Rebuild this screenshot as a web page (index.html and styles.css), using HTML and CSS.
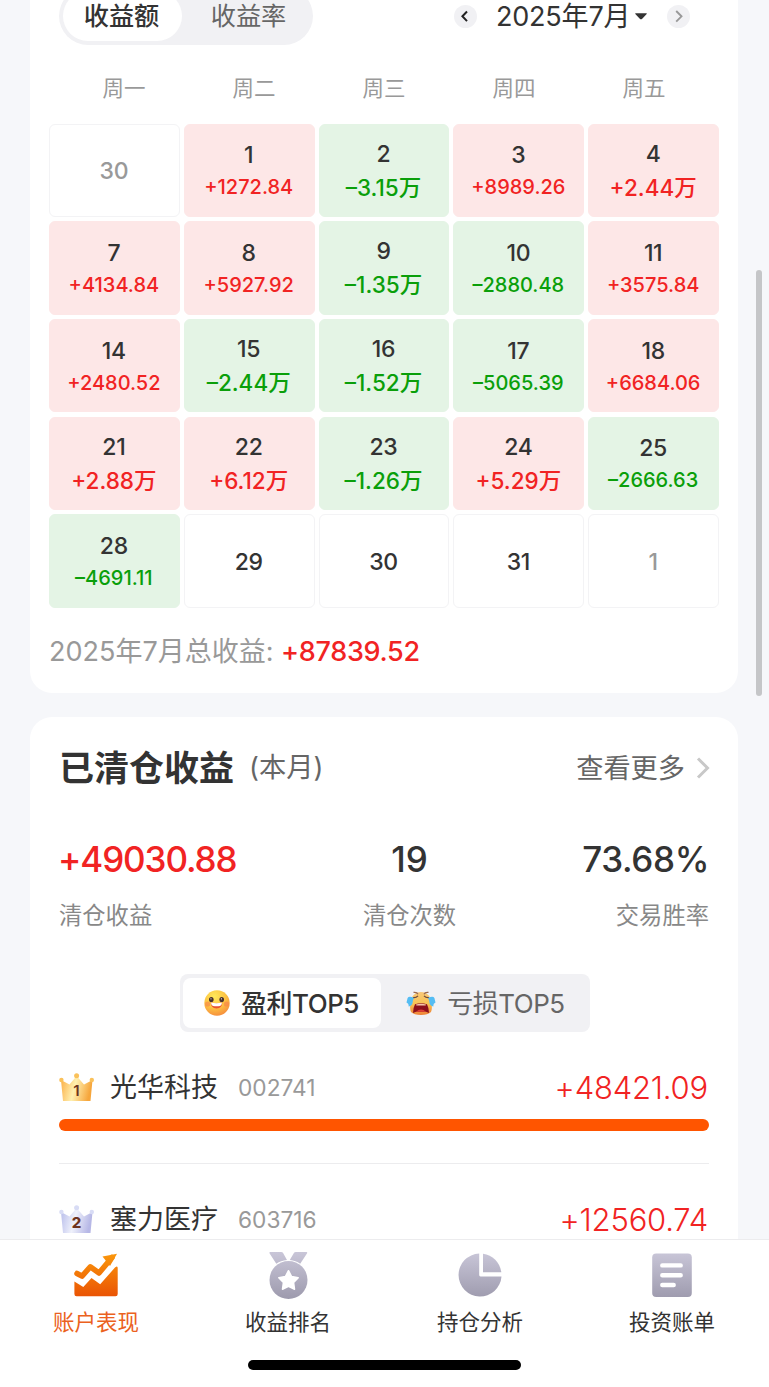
FILE: index.html
```html
<!DOCTYPE html>
<html lang="zh-CN">
<head>
    <meta charset="UTF-8">
    <meta name="viewport" content="width=device-width, initial-scale=1.0">
    <title>账户表现</title>
    <link rel="stylesheet" href="styles.css">
</head>
<body>
<div class="app">
    <main class="content">
        <section class="card calendar-card">
            <div class="calendar-header">
                <div class="pill-tabs">
                    <span class="pill-tab active">收益额</span>
                    <span class="pill-tab">收益率</span>
                </div>
                <div class="month-picker">
                    <span class="round-btn">
                        <svg width="23" height="23" viewBox="0 0 23 23"><path d="M13 6.5L8.4 11.3L13 16.1" fill="none" stroke="#222" stroke-width="2"/></svg>
                    </span>
                    <span class="month">2025年7月</span>
                    <svg class="caret" width="12" height="7" viewBox="0 0 12 7"><path d="M0.3 0.3H11.7V1L7.2 5.8Q6 6.8 4.8 5.8L0.3 1Z" fill="#333"/></svg>
                    <span class="round-btn">
                        <svg width="23" height="23" viewBox="0 0 23 23"><path d="M9.2 6L14.5 11.3L9.2 16.6" fill="none" stroke="#999" stroke-width="1.9"/></svg>
                    </span>
                </div>
            </div>

            <div class="weekdays">
                <span>周一</span><span>周二</span><span>周三</span><span>周四</span><span>周五</span>
            </div>

            <div class="days">
                <div class="day other"><b>30</b></div>
                <div class="day up"><b>1</b><span>+1272.84</span></div>
                <div class="day down big"><b>2</b><span>–3.15万</span></div>
                <div class="day up"><b>3</b><span>+8989.26</span></div>
                <div class="day up big"><b>4</b><span>+2.44万</span></div>

                <div class="day up"><b>7</b><span>+4134.84</span></div>
                <div class="day up"><b>8</b><span>+5927.92</span></div>
                <div class="day down big"><b>9</b><span>–1.35万</span></div>
                <div class="day down"><b>10</b><span>–2880.48</span></div>
                <div class="day up"><b>11</b><span>+3575.84</span></div>

                <div class="day up"><b>14</b><span>+2480.52</span></div>
                <div class="day down big"><b>15</b><span>–2.44万</span></div>
                <div class="day down big"><b>16</b><span>–1.52万</span></div>
                <div class="day down"><b>17</b><span>–5065.39</span></div>
                <div class="day up"><b>18</b><span>+6684.06</span></div>

                <div class="day up big"><b>21</b><span>+2.88万</span></div>
                <div class="day up big"><b>22</b><span>+6.12万</span></div>
                <div class="day down big"><b>23</b><span>–1.26万</span></div>
                <div class="day up big"><b>24</b><span>+5.29万</span></div>
                <div class="day down"><b>25</b><span>–2666.63</span></div>

                <div class="day down"><b>28</b><span>–4691.11</span></div>
                <div class="day"><b>29</b></div>
                <div class="day"><b>30</b></div>
                <div class="day"><b>31</b></div>
                <div class="day other"><b>1</b></div>
            </div>

            <p class="month-total">2025年7月总收益: <strong>+87839.52</strong></p>
        </section>

        <section class="card closed-card">
            <div class="closed-header">
                <h2>已清仓收益</h2>
                <span class="period">(本月)</span>
                <a class="more"><span>查看更多</span>
                    <svg width="14" height="22" viewBox="0 0 14 22"><path d="M2 1.5L11.5 11L2 20.5" fill="none" stroke="#c8c8c8" stroke-width="3"/></svg>
                </a>
            </div>

            <div class="stats">
                <div class="stat"><strong class="red">+49030.88</strong><span>清仓收益</span></div>
                <div class="stat center"><strong>19</strong><span>清仓次数</span></div>
                <div class="stat right"><strong>73.68%</strong><span>交易胜率</span></div>
            </div>

            <div class="top-tabs">
                <div class="top-tab active">
                    <svg width="26" height="26" viewBox="0 0 26 26">
                        <defs>
                            <radialGradient id="smile" cx="0.4" cy="0.25" r="0.8"><stop offset="0" stop-color="#ffe95a"/><stop offset="0.55" stop-color="#fdc343"/><stop offset="1" stop-color="#f58a3c"/></radialGradient>
                        </defs>
                        <circle cx="13" cy="13" r="12.7" fill="url(#smile)"/>
                        <circle cx="3.6" cy="14" r="2.6" fill="#f7814a" opacity="0.6"/>
                        <circle cx="22.4" cy="14" r="2.6" fill="#f7814a" opacity="0.6"/>
                        <ellipse cx="7.3" cy="9.6" rx="2.3" ry="2.7" fill="#47302c"/>
                        <ellipse cx="17.7" cy="9.6" rx="2.3" ry="2.7" fill="#47302c"/>
                        <circle cx="7" cy="8.8" r="0.6" fill="#fff"/>
                        <circle cx="17.4" cy="8.8" r="0.6" fill="#fff"/>
                        <path d="M6.8 12.6Q12.5 13.8 18.2 12.6Q18.4 18.4 12.5 18.4Q6.8 18.4 6.8 12.6Z" fill="#e9532f"/>
                        <path d="M6.9 12.6Q12.5 13.8 18.1 12.6Q17.8 15.6 16 16Q12.5 16.6 9 16Q7.2 15.6 6.9 12.6Z" fill="#fff"/>
                    </svg>
                    <span>盈利TOP5</span>
                </div>
                <div class="top-tab">
                    <svg width="30" height="26" viewBox="0 0 30 26">
                        <defs>
                            <linearGradient id="cry" x1="0" y1="0" x2="0" y2="1"><stop offset="0" stop-color="#f9c879"/><stop offset="0.5" stop-color="#f8c454"/><stop offset="1" stop-color="#ee8136"/></linearGradient>
                        </defs>
                        <path d="M15 2C21 2 25 6 25.5 13Q26.5 19 25 22Q22 25 15 25Q8 25 5 22Q3.5 19 4.5 13C5 6 9 2 15 2Z" fill="url(#cry)"/>
                        <path d="M7.5 2.4Q11 1.8 12 4.2M22.5 2.4Q19 1.8 18 4.2" fill="none" stroke="#9b6a50" stroke-width="1.2"/>
                        <path d="M7 7.6Q10 8 12 5.8M23 7.6Q20 8 18 5.8" fill="none" stroke="#69453d" stroke-width="1.2"/>
                        <path d="M8 8Q3 5.6 1.6 8L0.5 12.5Q3 13.5 2.6 16.5Q6.4 15.5 6.6 12.5Q6.6 10 8 8Z" fill="#55bdf3"/>
                        <path d="M22 8Q27 5.6 28.4 8L29.5 12.5Q27 13.5 27.4 16.5Q23.6 15.5 23.4 12.5Q23.4 10 22 8Z" fill="#55bdf3"/>
                        <path d="M9 14.2Q15 12.4 21 14.2Q23 18 23 23L20 21.8H10L7 23Q7 18 9 14.2Z" fill="#8c101b"/>
                        <path d="M10 14.4Q15 13 20 14.4L19.6 15.5H10.4Z" fill="#f6c5a9"/>
                        <path d="M10 21.8Q15 17 20 21.8Z" fill="#df3f36"/>
                    </svg>
                    <span>亏损TOP5</span>
                </div>
            </div>

            <div class="rank-item">
                <div class="rank-row">
                    <svg class="crown" width="36" height="29" viewBox="0 0 36 29">
                        <defs>
                            <linearGradient id="gold" x1="0" y1="0" x2="1" y2="0.2"><stop offset="0" stop-color="#fbac43"/><stop offset="0.5" stop-color="#fff0b0"/><stop offset="1" stop-color="#f6a63c"/></linearGradient>
                        </defs>
                        <path d="M2 7L10.5 11.5L17.6 3L25 11.5L33.5 7L31.5 28H4Z" fill="url(#gold)"/>
                        <circle cx="2.4" cy="7" r="2.2" fill="#fac15a"/>
                        <circle cx="17.6" cy="2.7" r="2.5" fill="#fac15a"/>
                        <circle cx="32.8" cy="7" r="2.2" fill="#fac15a"/>
                        <text x="17.5" y="23" text-anchor="middle" class="crown-num">1</text>
                    </svg>
                    <span class="stock">光华科技</span>
                    <span class="code">002741</span>
                    <span class="profit">+48421.09</span>
                </div>
                <div class="bar"></div>
            </div>

            <div class="rank-item">
                <div class="rank-row">
                    <svg class="crown" width="36" height="29" viewBox="0 0 36 29">
                        <defs>
                            <linearGradient id="silver" x1="0" y1="0" x2="1" y2="0.2"><stop offset="0" stop-color="#b6bbea"/><stop offset="0.5" stop-color="#eff1fb"/><stop offset="1" stop-color="#b7b8e6"/></linearGradient>
                        </defs>
                        <path d="M2 7L10.5 11.5L17.6 3L25 11.5L33.5 7L31.5 28H4Z" fill="url(#silver)"/>
                        <circle cx="2.4" cy="7" r="2.2" fill="#d8dcf5"/>
                        <circle cx="17.6" cy="2.7" r="2.5" fill="#d8dcf5"/>
                        <circle cx="32.8" cy="7" r="2.2" fill="#d8dcf5"/>
                        <text x="17.5" y="23" text-anchor="middle" class="crown-num bold">2</text>
                    </svg>
                    <span class="stock">塞力医疗</span>
                    <span class="code">603716</span>
                    <span class="profit">+12560.74</span>
                </div>
            </div>
        </section>
        <div class="scrollbar"></div>
    </main>

    <nav class="tabbar">
        <div class="tabs">
            <a class="tab active">
                <svg width="46" height="46" viewBox="0 0 46 46">
                    <defs>
                        <linearGradient id="orange" gradientUnits="userSpaceOnUse" x1="0" y1="0" x2="0" y2="44"><stop offset="0" stop-color="#fb9a0c"/><stop offset="1" stop-color="#ea5404"/></linearGradient>
                    </defs>
                    <path d="M4 21.5L9 24.2L17.3 14.8L26 21L39 5.5" fill="none" stroke="url(#orange)" stroke-width="5.5" stroke-linecap="round" stroke-linejoin="round"/>
                    <path d="M29.5 4.5L44 1.8L37 14Z" fill="url(#orange)"/>
                    <path d="M1.4 29.5L10.3 35L18.5 26L27.2 32.3L42 15.5Q44.7 13.2 44.7 16V42Q44.7 44.3 42.5 44.3H3.6Q1.4 44.3 1.4 42Z" fill="url(#orange)"/>
                </svg>
                <span>账户表现</span>
            </a>
            <a class="tab">
                <svg width="46" height="48" viewBox="0 0 46 48">
                    <defs>
                        <linearGradient id="gray" gradientUnits="userSpaceOnUse" x1="0" y1="0" x2="0" y2="46"><stop offset="0" stop-color="#c9c6d8"/><stop offset="1" stop-color="#9e9bae"/></linearGradient>
                    </defs>
                    <path d="M5.3 0H16.3Q17.5 0 18.1 1L22 8Q15.8 8.4 11.3 11.8L4.5 1.2Q4 0 5.3 0Z" fill="url(#gray)"/>
                    <path d="M41.3 0H30.7Q29.5 0 28.9 1L24.8 8Q30.8 8.4 35.2 11.8L42.1 1.2Q42.7 0 41.3 0Z" fill="url(#gray)"/>
                    <circle cx="23.5" cy="28" r="19" fill="url(#gray)"/>
                    <path d="M23.5 18.7L26.6 24.6L33.2 25.8L28.6 30.6L29.5 37.2L23.5 34.4L17.5 37.2L18.4 30.6L13.8 25.8L20.4 24.6Z" fill="#fff" stroke="#fff" stroke-width="1.5" stroke-linejoin="round"/>
                </svg>
                <span>收益排名</span>
            </a>
            <a class="tab">
                <svg width="46" height="46" viewBox="0 0 46 46">
                    <path d="M22.2 1.5A21.5 21.5 0 1 0 44.5 24.4H23.5Q22.2 24.4 22.2 23Z" fill="url(#gray)"/>
                    <path d="M26 1.7A21.5 21.5 0 0 1 44.3 20.2H26Z" fill="url(#gray)"/>
                </svg>
                <span>持仓分析</span>
            </a>
            <a class="tab">
                <svg width="46" height="46" viewBox="0 0 46 46">
                    <rect x="3.2" y="1.5" width="39.6" height="43.5" rx="4" fill="url(#gray)"/>
                    <path d="M13.3 13.4H31.7M13.3 23.3H31.7M13.3 33H24.7" stroke="#fff" stroke-width="4.4" stroke-linecap="round"/>
                </svg>
                <span>投资账单</span>
            </a>
        </div>
        <div class="home-indicator"></div>
    </nav>
</div>
</body>
</html>
```
FILE: styles.css
```css
* {
    box-sizing: border-box;
}

body {
    margin: 0;
    font-family: Inter, "Noto Sans CJK SC", sans-serif;
    color: #333;
    background: #f6f7fa;
}

.app {
    display: flex;
    flex-direction: column;
    height: 1387px;
    overflow: hidden;
}

.content {
    position: relative;
    flex: 1;
    min-height: 0;
    overflow: hidden;
    padding: 0 31px 0 30px;
}

.card {
    background: #fff;
    border-radius: 22px;
}

/* calendar */
.calendar-card {
    height: 733px;
    margin-top: -40px;
    padding: 27px 19px 0;
}

.calendar-header {
    display: flex;
    justify-content: space-between;
    align-items: center;
    height: 58px;
    padding: 0 29px 0 10px;
}

.pill-tabs {
    display: flex;
    width: 254px;
    height: 58px;
    padding: 4px;
    border-radius: 29px;
    background: #f1f1f4;
}

.pill-tab {
    width: 119px;
    height: 50px;
    border-radius: 25px;
    line-height: 51px;
    font-size: 25.2px;
    text-align: center;
    color: #666;
}

.pill-tab + .pill-tab {
    margin-left: 7px;
}

.pill-tab.active {
    padding-right: 2px;
    background: #fff;
    color: #333;
    font-weight: 500;
}

.month-picker {
    display: flex;
    align-items: center;
}

.round-btn {
    width: 23px;
    height: 23px;
    border-radius: 50%;
    background: #f1f1f4;
}

.round-btn svg {
    display: block;
}

.month {
    margin-left: 19px;
    padding-top: 1px;
    width: 134px;
    font-size: 27px;
    line-height: 40px;
    letter-spacing: -0.2px;
    white-space: nowrap;
}

.caret {
    margin: 0 20px 0 5px;
}

.weekdays {
    display: grid;
    grid-template-columns: repeat(5, 1fr);
    margin: 27px 10px 0 10px;
    height: 32px;
    line-height: 32px;
    font-size: 21.5px;
    text-align: center;
    color: #999;
}

.days {
    display: grid;
    grid-template-columns: repeat(5, 1fr);
    grid-auto-rows: 93.6px;
    gap: 4.1px;
    margin-top: 19.5px;
}

.day {
    display: flex;
    flex-direction: column;
    align-items: center;
    justify-content: center;
    padding: 2px 1px 0 0;
    border: 1px solid #f3f3f5;
    border-radius: 6px;
}

.day b {
    font-size: 23px;
    line-height: 32px;
    font-weight: 500;
    letter-spacing: -0.3px;
}

.day span {
    font-size: 20px;
    line-height: 32px;
    font-weight: 500;
}

.day.big {
    padding-top: 3px;
}

.day.big span {
    font-size: 22.5px;
    line-height: 36px;
}

.day.other b {
    color: #999;
}

.day.up {
    background: #fde7e7;
    border-color: #fde7e7;
}

.day.up span {
    color: #f12323;
}

.day.down {
    background: #e4f4e5;
    border-color: #e4f4e5;
}

.day.down span {
    color: #0a9f0a;
}

.month-total {
    margin: 24px 0 0;
    font-size: 27px;
    line-height: 40px;
    color: #999;
}

.month-total strong {
    font-weight: 500;
    letter-spacing: -0.3px;
    color: #f12323;
}

/* closed positions */
.closed-card {
    height: 600px;
    margin-top: 24px;
    padding: 26px 29px 0 29px;
}

.closed-header {
    display: flex;
    align-items: center;
    height: 50px;
}

.closed-header h2 {
    margin: 0;
    font-size: 35px;
    font-weight: 700;
    line-height: 50px;
}

.period {
    margin-left: 15px;
    font-size: 27.3px;
    line-height: 50px;
    color: #666;
}

.more {
    display: flex;
    align-items: center;
    gap: 11px;
    margin-left: auto;
    margin-right: -1px;
    font-size: 27.2px;
    line-height: 39px;
    color: #666;
}

.stats {
    display: flex;
    justify-content: space-between;
    margin-top: 45px;
}

.stat {
    display: flex;
    flex-direction: column;
    width: 200px;
}

.stat strong {
    font-size: 35px;
    line-height: 42px;
    font-weight: 500;
}

.stat span {
    margin-top: 19px;
    font-size: 23.3px;
    line-height: 34px;
    color: #888;
}

.stat .red {
    margin-left: -1px;
    letter-spacing: -1.1px;
    color: #f12323;
}

.stat.center {
    align-items: center;
    margin-left: 51px;
}

.stat.right {
    align-items: flex-end;
}

.stat.right strong {
    letter-spacing: -0.4px;
}

.top-tabs {
    display: flex;
    width: 410px;
    height: 58px;
    margin: 41px 0 0 120.5px;
    padding: 4px 3px;
    border-radius: 8px;
    background: #f1f1f4;
}

.top-tab {
    display: flex;
    align-items: center;
    justify-content: center;
    gap: 11px;
    width: 198px;
    border-radius: 8px;
    font-size: 26px;
    line-height: 37px;
    letter-spacing: -0.5px;
    color: #666;
}

.top-tab + .top-tab {
    margin-left: 6px;
}

.top-tab.active {
    background: #fff;
    color: #333;
    font-weight: 500;
}

.rank-item {
    height: 132px;
    padding-top: 35px;
    border-bottom: 1px solid #ececee;
}

.rank-row {
    display: flex;
    align-items: center;
    height: 40px;
}

.crown-num {
    font-family: Inter, sans-serif;
    font-size: 15px;
    font-weight: 600;
    fill: #6e3420;
}

.crown-num.bold {
    font-weight: 800;
}

.stock {
    margin-left: 15px;
    font-size: 27px;
    line-height: 39px;
}

.code {
    margin-left: 20px;
    padding-top: 1px;
    font-size: 22.7px;
    color: #999;
}

.profit {
    margin-left: auto;
    padding-right: 1px;
    font-size: 31px;
    font-weight: 300;
    letter-spacing: -0.2px;
    color: #f12323;
}

.bar {
    height: 12px;
    margin-top: 12px;
    border-radius: 6px;
    background: #ff5500;
}

.scrollbar {
    position: absolute;
    top: 270px;
    right: 7px;
    width: 6px;
    height: 426px;
    border-radius: 3px;
    background: #c5c6c8;
}

/* bottom navigation */
.tabbar {
    height: 148px;
    border-top: 1px solid #ececee;
    background: #fff;
}

.tabs {
    display: flex;
    height: 120px;
    padding-right: 1px;
}

.tab {
    flex: 1;
    display: flex;
    flex-direction: column;
    align-items: center;
    justify-content: space-between;
    padding: 12px 0 22px;
    height: 120px;
    font-size: 21.5px;
    line-height: 32px;
}

.tab.active {
    color: #eb6120;
}

.home-indicator {
    width: 273px;
    height: 10px;
    margin: 0 auto;
    border-radius: 5px;
    background: #000;
}
```
